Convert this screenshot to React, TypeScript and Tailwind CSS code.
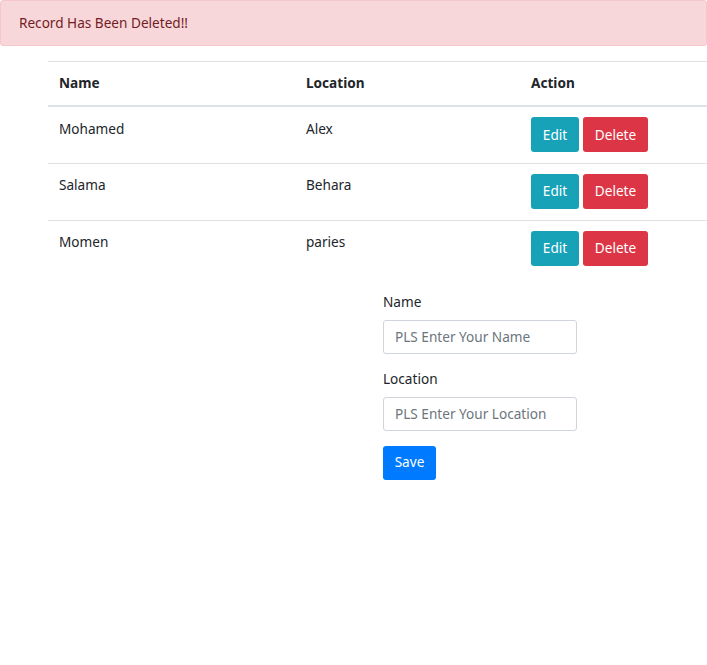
const rows = [
  { name: 'Mohamed', location: 'Alex' },
  { name: 'Salama', location: 'Behara' },
  { name: 'Momen', location: 'paries' },
];

export default function App() {
  return (
    <div
      className="min-h-screen w-full overflow-hidden bg-white text-[13.6px] text-[#212529]"
      style={{ fontFamily: '"Noto Sans", "Open Sans", sans-serif' }}
    >
      {/* Alert */}
      <div className="h-[46px] flex items-center px-[18px] bg-[#f8d7da] border border-[#f5c6cb] rounded-[3px] text-[#721c24]">
        Record Has Been Deleted!!
      </div>

      {/* Table */}
      <div className="mt-[15px] ml-[48px] w-[700px]">
        <table className="w-full border-collapse text-left">
          <thead>
            <tr className="border-t border-[#dee2e6] border-b-2 border-b-[#dee2e6]">
              <th className="w-[247px] h-[44px] px-[11px] pb-[1px] font-bold align-middle">Name</th>
              <th className="w-[225px] px-[11px] pb-[1px] font-bold align-middle">Location</th>
              <th className="px-[11px] pb-[1px] font-bold align-middle">Action</th>
            </tr>
          </thead>
          <tbody>
            {rows.map((r, i) => (
              <tr key={r.name} className={i > 0 ? 'border-t border-[#dee2e6]' : ''}>
                <td className={`${i === 0 ? 'h-[58px] pt-[12px]' : 'h-[57px] pt-[11px]'} px-[11px] align-top`}>{r.name}</td>
                <td className={`${i === 0 ? 'pt-[12px]' : 'pt-[11px]'} px-[11px] align-top`}>{r.location}</td>
                <td className={`${i === 0 ? '' : 'pb-[2px]'} px-[11px] align-middle`}>
                  <div className="flex gap-[4px]">
                    <button className="h-[35px] w-[48px] rounded-[3px] bg-[#17a2b8] text-white">Edit</button>
                    <button className="h-[35px] w-[65px] rounded-[3px] bg-[#dc3545] text-white">Delete</button>
                  </div>
                </td>
              </tr>
            ))}
          </tbody>
        </table>
      </div>

      {/* Form */}
      <div className="ml-[383px] mt-[14px] w-[194px] flex flex-col">
        <label className="leading-[20px]">Name</label>
        <input
          className="mt-[8px] h-[34px] w-full rounded-[3px] border border-[#ced4da] px-[11px] outline-none placeholder:text-[#6c757d]"
          placeholder="PLS Enter Your Name"
        />
        <label className="mt-[15px] leading-[20px]">Location</label>
        <input
          className="mt-[8px] h-[34px] w-full rounded-[3px] border border-[#ced4da] px-[11px] outline-none placeholder:text-[#6c757d]"
          placeholder="PLS Enter Your Location"
        />
        <button className="mt-[15px] h-[34px] w-[53px] rounded-[3px] bg-[#007bff] text-white">Save</button>
      </div>
    </div>
  );
}
